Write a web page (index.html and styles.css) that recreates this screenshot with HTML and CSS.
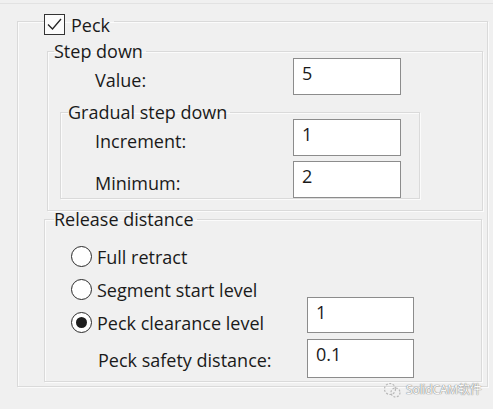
FILE: index.html
```html
<!DOCTYPE html>
<html>
<head>
<meta charset="utf-8">
<link rel="stylesheet" href="styles.css">
</head>
<body>
<div class="frame">
  <fieldset class="box outer">
    <legend class="lg-outer">
      <span class="check"><svg width="21" height="21" viewBox="0 0 21 21"><path d="M4 10.5 L8.5 15 L17 5" fill="none" stroke="#222" stroke-width="1.3"/></svg></span>
      <span>Peck</span>
    </legend>
    <fieldset class="box stepdown">
      <legend class="lg lg-step">Step down</legend>
      <div class="row row-value">
        <span class="lab lab-value">Value:</span>
        <div class="input">5</div>
      </div>
      <fieldset class="box gradual">
        <legend class="lg lg-grad">Gradual step down</legend>
        <div class="row row-inc">
          <span class="lab lab-grad">Increment:</span>
          <div class="input">1</div>
        </div>
        <div class="row row-min">
          <span class="lab lab-grad">Minimum:</span>
          <div class="input">2</div>
        </div>
      </fieldset>
    </fieldset>
    <fieldset class="box release">
      <legend class="lg lg-rel">Release distance</legend>
      <div class="radio-row r1"><span class="radio"></span><span>Full retract</span></div>
      <div class="radio-row r2"><span class="radio"></span><span>Segment start level</span></div>
      <div class="radio-row r3">
        <div class="radio-lab"><span class="radio on"></span><span>Peck clearance level</span></div>
        <div class="input input-r">1</div>
      </div>
      <div class="radio-row r4">
        <span class="lab lab-safety">Peck safety distance:</span>
        <div class="input input-r input-tall">0.1</div>
      </div>
    </fieldset>
  </fieldset>
  <div class="watermark">
    <svg width="19" height="17" viewBox="0 0 19 17"><circle cx="7" cy="7" r="5.5" fill="none" stroke="#b8b8b8" stroke-width="1.2" stroke-dasharray="2 1.5"/><circle cx="12.5" cy="10.5" r="4.5" fill="none" stroke="#b8b8b8" stroke-width="1.2" stroke-dasharray="2 1.5"/></svg>
    <span>SolidCAM软件</span>
  </div>
</div>
</body>
</html>
```
FILE: styles.css
```css
html, body {
  margin: 0;
  padding: 0;
  background: #f0f0f0;
}
body {
  width: 493px;
  height: 409px;
  overflow: hidden;
  font-family: "Open Sans", "Noto Sans", sans-serif;
  font-size: 18px;
  line-height: 20px;
  color: #1a1a1a;
}
.frame {
  position: relative;
  margin-top: 3px;
  border-top: 1px solid #e2e2e2;
  height: 405px;
  padding: 0 5px 0 17px;
}
.box {
  margin: 0;
  padding: 0;
  min-width: 0;
  border: 1px solid #dadada;
  box-shadow: inset 1px 1px 0 #fbfbfb, 1px 1px 0 #fbfbfb;
}
.outer {
  margin-top: 4px;
  padding-bottom: 4px;
}
.lg-outer {
  margin-left: 26px;
  padding: 6px 4px 0 0;
  display: flex;
  align-items: center;
  gap: 6px;
}
.check {
  width: 21px;
  height: 21px;
  box-sizing: border-box;
  border: 1px solid #333;
  background: #fbfbfb;
  display: flex;
}
.check svg { margin: -1px; }
.lg {
  padding: 0 3px 0 0;
}
.stepdown {
  margin: 6px 4px 0 29px;
  padding-bottom: 11px;
}
.lg-step { margin-left: 6px; }
.row {
  display: flex;
  align-items: center;
}
.lab {
  box-sizing: border-box;
  padding-top: 6px;
}
.lab-value {
  width: 245px;
  padding-left: 47px;
}
.row-value { margin-top: -3px; }
.input {
  width: 108px;
  height: 37px;
  box-sizing: border-box;
  background: #fff;
  border: 1px solid #8c8c8c;
  padding: 4px 8px;
  line-height: 20px;
}
.gradual {
  margin: 7px 62px 0 12px;
}
.lg-grad { margin-left: 7px; }
.lab-grad {
  width: 232px;
  padding-left: 34px;
}
.row-inc { margin-top: -3px; }
.row-min { margin-top: 5px; }
.release {
  margin: -2px 5px 0 26px;
  padding-bottom: 3px;
}
.lg-rel { margin-left: 9px; }
.radio-row {
  display: flex;
  align-items: center;
  gap: 5px;
  padding-left: 26px;
  height: 21px;
}
.r1 { margin-top: 17px; }
.r2 { margin-top: 12px; }
.r3 {
  margin-top: -3px;
  height: 36px;
  align-items: flex-end;
  gap: 0;
}
.radio-lab {
  display: flex;
  align-items: center;
  gap: 5px;
  width: 236px;
}
.radio {
  width: 21px;
  height: 21px;
  box-sizing: border-box;
  border: 1.6px solid #2a2a2a;
  border-radius: 50%;
  background: #fff;
  display: flex;
  align-items: center;
  justify-content: center;
  flex: none;
}
.radio.on::after {
  content: "";
  width: 11px;
  height: 11px;
  border-radius: 50%;
  background: #1e1e1e;
}
.r4 {
  margin-top: 6px;
  height: 39px;
  gap: 0;
}
.lab-safety {
  width: 236px;
  padding: 3px 0 0 27px;
}
.input-r {
  width: 107px;
  height: 36px;
}
.input-tall { height: 39px; }
.watermark {
  position: absolute;
  left: 383px;
  top: 376px;
  display: flex;
  align-items: center;
  gap: 4px;
  white-space: nowrap;
  font-family: "Noto Sans", "Noto Sans CJK SC", sans-serif;
  font-size: 12px;
  letter-spacing: -0.2px;
  color: #fafafa;
  text-shadow: 0 0 1px #7a7a7a, 0 0 1px #7a7a7a;
}
```
